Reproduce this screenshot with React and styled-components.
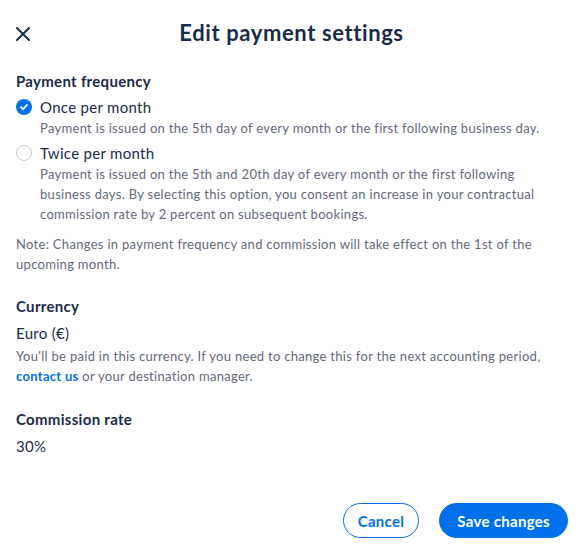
import React from "react";
import styled, { createGlobalStyle } from "styled-components";

const GlobalStyle = createGlobalStyle`
  html, body {
    margin: 0;
    padding: 0;
    background: #ffffff;
  }
  body {
    font-family: Lato, "Noto Sans", sans-serif;
    color: #1a2b49;
  }
`;

const Page = styled.div`
  height: 100vh;
  display: flex;
  flex-direction: column;
  box-sizing: border-box;
`;

const Header = styled.div`
  height: 65px;
  display: flex;
  align-items: center;
  justify-content: center;
  position: relative;
`;

const CloseButton = styled.button`
  position: absolute;
  left: 13px;
  top: 24px;
  width: 20px;
  height: 20px;
  padding: 0;
  border: none;
  background: none;
  display: flex;
  align-items: center;
  justify-content: center;
  color: #1a2b49;
`;

const Title = styled.h1`
  margin: 0;
  font-size: 22px;
  font-weight: 700;
  letter-spacing: 0.6px;
`;

const Body = styled.div`
  padding: 0 16px;
  letter-spacing: 0.3px;
`;

const Section = styled.div`
  margin-top: ${(p) => p.$top}px;
`;

const Label = styled.div`
  font-size: 15px;
  font-weight: 700;
  line-height: 22px;
`;

const Value = styled.div`
  font-size: 15px;
  line-height: 22px;
  margin-top: 5px;
`;

const Option = styled.div`
  display: grid;
  grid-template-columns: 24px 1fr;
  margin-top: ${(p) => p.$top}px;
`;

const Radio = styled.span`
  width: 16px;
  height: 16px;
  margin-top: 3px;
  border-radius: 50%;
  box-sizing: border-box;
  display: flex;
  align-items: center;
  justify-content: center;
  background: ${(p) => (p.$checked ? "#0071eb" : "#fff")};
  border: ${(p) => (p.$checked ? "none" : "1.5px solid #c4c8d0")};
`;

const OptionTitle = styled.div`
  font-size: 15px;
  line-height: 22px;
`;

const Text = styled.p`
  margin: ${(p) => p.$top || 0}px 0 0;
  font-size: 13px;
  line-height: 20px;
  color: #63687a;
`;

const Link = styled.a`
  color: #0071eb;
  font-weight: 700;
  text-decoration: none;
`;

const Footer = styled.div`
  margin-top: auto;
  display: flex;
  justify-content: flex-end;
  gap: 20px;
  padding: 0 15px 18px;
`;

const Button = styled.button`
  height: 35px;
  padding: 0 ${(p) => (p.$primary ? 17 : 14)}px;
  border-radius: 18px;
  font-family: inherit;
  font-size: 15px;
  font-weight: 700;
  letter-spacing: 0.3px;
  cursor: pointer;
  border: 1px solid #0071eb;
  background: ${(p) => (p.$primary ? "#0071eb" : "#fff")};
  color: ${(p) => (p.$primary ? "#fff" : "#0071eb")};
`;

const CloseIcon = () => (
  <svg width="14" height="14" viewBox="0 0 14 14" fill="none">
    <path
      d="M1 1L13 13M13 1L1 13"
      stroke="currentColor"
      strokeWidth="2"
      strokeLinecap="round"
    />
  </svg>
);

const CheckIcon = () => (
  <svg width="10" height="10" viewBox="0 0 10 10" fill="none">
    <path
      d="M2 5.2L4.1 7.2L8 2.9"
      stroke="#fff"
      strokeWidth="1.8"
      strokeLinecap="round"
      strokeLinejoin="round"
    />
  </svg>
);

const App = () => {
  return (
    <Page>
      <GlobalStyle />
      <Header>
        <CloseButton aria-label="Close">
          <CloseIcon />
        </CloseButton>
        <Title>Edit payment settings</Title>
      </Header>
      <Body>
        <Section $top={5}>
          <Label>Payment frequency</Label>
          <Option $top={4}>
            <Radio $checked>
              <CheckIcon />
            </Radio>
            <div>
              <OptionTitle>Once per month</OptionTitle>
              <Text>
                Payment is issued on the 5th day of every month or the first
                following business day.
              </Text>
            </div>
          </Option>
          <Option $top={4}>
            <Radio />
            <div>
              <OptionTitle>Twice per month</OptionTitle>
              <Text>
                Payment is issued on the 5th and 20th day of every month or the
                first following business days. By selecting this option, you
                consent an increase in your contractual commission rate by 2
                percent on subsequent bookings.
              </Text>
            </div>
          </Option>
          <Text $top={10}>
            Note: Changes in payment frequency and commission will take effect
            on the 1st of the upcoming month.
          </Text>
        </Section>
        <Section $top={21}>
          <Label>Currency</Label>
          <Value>Euro (€)</Value>
          <Text $top={2}>
            You'll be paid in this currency. If you need to change this for the
            next accounting period, <Link href="#">contact us</Link> or your
            destination manager.
          </Text>
        </Section>
        <Section $top={22}>
          <Label>Commission rate</Label>
          <Value>30%</Value>
        </Section>
      </Body>
      <Footer>
        <Button>Cancel</Button>
        <Button $primary>Save changes</Button>
      </Footer>
    </Page>
  );
};

export default App;
